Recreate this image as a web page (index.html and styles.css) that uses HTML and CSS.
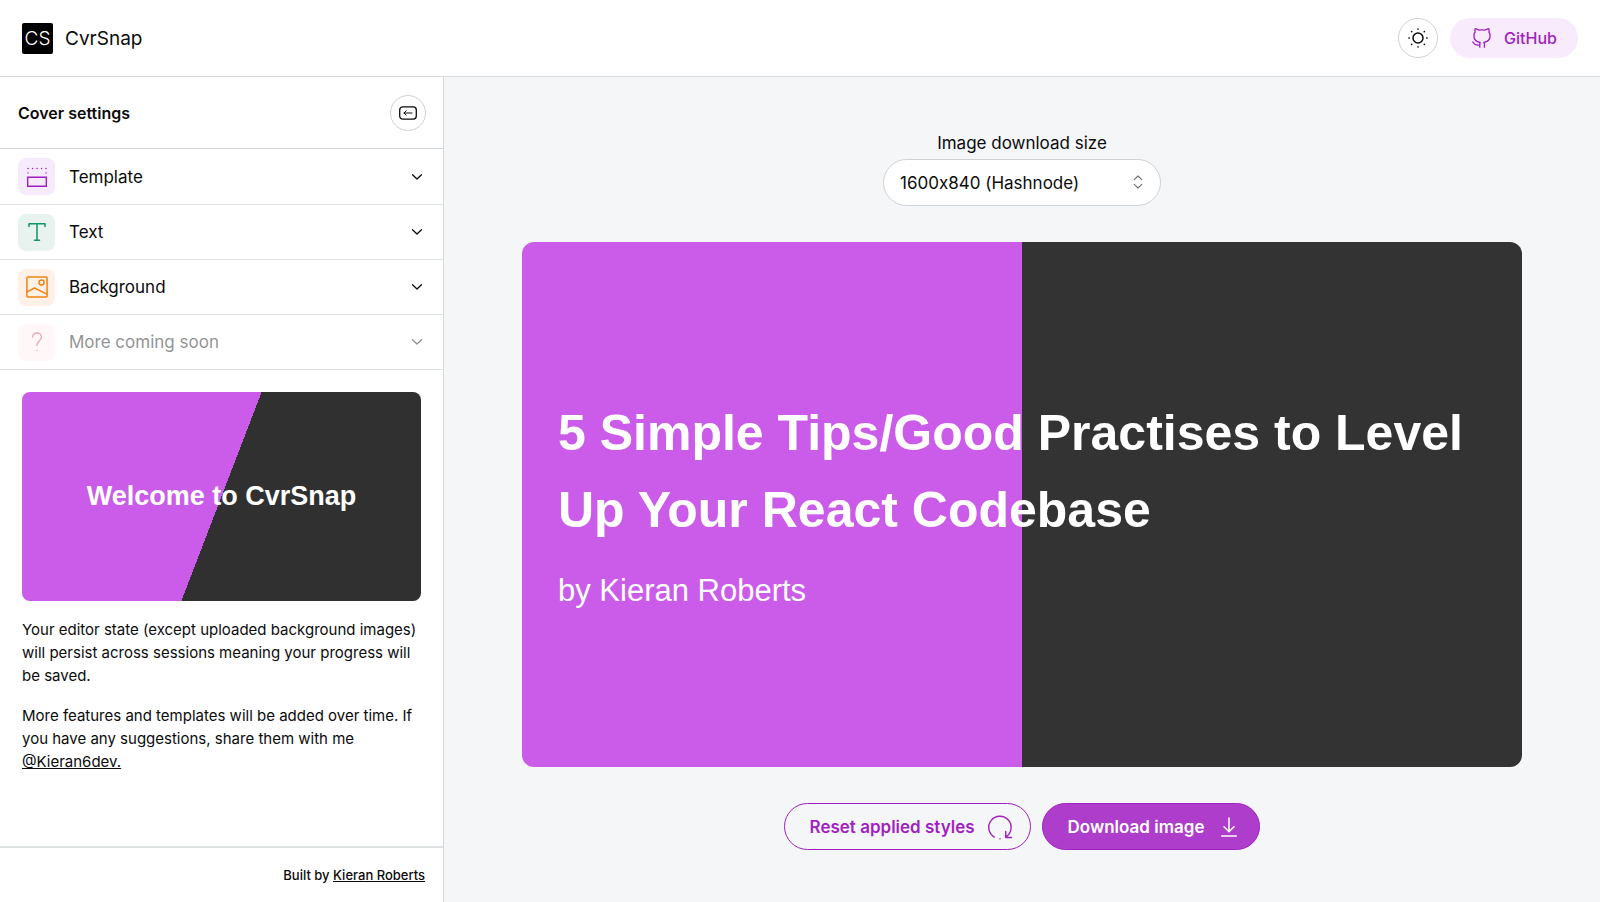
FILE: index.html
```html
<!DOCTYPE html>
<html lang="en">
<head>
<meta charset="utf-8">
<meta name="viewport" content="width=device-width, initial-scale=1">
<title>CvrSnap</title>
<link rel="stylesheet" href="styles.css">
</head>
<body>
<header class="topbar">
  <a class="brand" href="#"><span class="brand-mark">CS</span><span>CvrSnap</span></a>
  <div class="topbar-actions">
    <button class="round-button round-button-large" type="button" aria-label="Toggle theme">
      <svg width="20" height="20" viewBox="0 0 20 20" fill="none" stroke="currentColor" stroke-width="1.5" stroke-linecap="round"><circle cx="10" cy="10" r="5"/><path d="M10 .9v.4M10 18.7v.4M.9 10h.4M18.7 10h.4M3.6 3.6l.2.2M16.2 16.2l.2.2M16.4 3.6l-.2.2M3.8 16.2l-.2.2"/></svg>
    </button>
    <a class="github" href="#">
      <svg width="20" height="20" viewBox="0 0 20 20" fill="none" stroke="currentColor" stroke-width="1.3" stroke-linecap="round" stroke-linejoin="round"><path d="M7.800 19.200v-3.300c0-.6.100-1 .4-1.400C4.600 13.800 1.900 11.600 1.900 7.700c0-1.500.4-2.700 1.200-3.700-.3-1-.2-2.200.1-3.300 1.400.1 2.500.6 3.500 1.400 2.200-.4 4.400-.4 6.600 0 1-.8 2.100-1.300 3.500-1.400.3 1.100.4 2.300.1 3.300.8 1 1.200 2.200 1.200 3.700 0 3.900-2.700 6.100-6.300 6.800.3.400.6.800.6 1.400v3.300M7.800 17c-2 .4-3.700.2-4.900-.7-.9-.7-1.300-1.700-2.100-2.300"/></svg>
      <span>GitHub</span>
    </a>
  </div>
</header>
<div class="workspace">
  <aside class="sidebar">
    <div class="sidebar-head">
      <h2>Cover settings</h2>
      <button class="round-button" type="button" aria-label="Collapse settings">
        <svg width="18" height="14" viewBox="0 0 18 14" fill="none" stroke="currentColor" stroke-linecap="round" stroke-linejoin="round"><rect x=".7" y=".9" width="16.600" height="12.200" rx="3" stroke-width="1.300"/><path d="M13 7H5M7.200 4.800 5 7l2.200 2.200"/></svg>
      </button>
    </div>
    <nav class="sections" aria-label="Cover settings">
      <button class="section" type="button">
        <span class="tile tile-purple"><svg width="22" height="22" viewBox="0 0 22 22" fill="none" stroke="currentColor" stroke-width="1.400"><path d="M1.700 11.200h18.600v9.100H1.700z"/><path stroke-linecap="round" d="M2 2.500h.1M6.500 2.500h.1M11 2.500h.1M15.500 2.500h.1M20 2.500h.1M2 6.900h.1M20 6.900h.1"/></svg></span>
        <span class="section-name">Template</span>
        <svg class="chevron" width="12" height="8" viewBox="0 0 12 8"><path d="m1.500 1.800 4.500 4.200 4.500-4.200"/></svg>
      </button>
      <button class="section" type="button">
        <span class="tile tile-green"><svg width="22" height="22" viewBox="0 0 22 22" fill="none" stroke="currentColor" stroke-width="1.500" stroke-linecap="round" stroke-linejoin="round"><path d="M3 5.500V2.800h16v2.700M11 2.800v16.400M8.500 19.200h5"/></svg></span>
        <span class="section-name">Text</span>
        <svg class="chevron" width="12" height="8" viewBox="0 0 12 8"><path d="m1.500 1.800 4.500 4.200 4.500-4.200"/></svg>
      </button>
      <button class="section" type="button">
        <span class="tile tile-orange"><svg width="22" height="22" viewBox="0 0 22 22" fill="none" stroke="currentColor" stroke-width="1.500" stroke-linejoin="round"><rect x=".9" y=".9" width="20.200" height="20.200" rx="1"/><circle cx="15.500" cy="6.500" r="2.500"/><path d="M1 15.800 8.500 12 21 18.100"/></svg></span>
        <span class="section-name">Background</span>
        <svg class="chevron" width="12" height="8" viewBox="0 0 12 8"><path d="m1.500 1.800 4.500 4.200 4.500-4.200"/></svg>
      </button>
      <button class="section" type="button" disabled>
        <span class="tile tile-red"><svg width="22" height="22" viewBox="0 0 22 22" fill="none" stroke="currentColor" stroke-width="1.300" stroke-linecap="round" stroke-linejoin="round"><path d="M6.500 6.200C6.500 3.600 8.500 2 11 2s4.500 1.700 4.500 4.100c0 3.200-4.500 4.400-4.500 7.700v.7M11 19.300v.2"/></svg></span>
        <span class="section-name">More coming soon</span>
        <svg class="chevron" width="12" height="8" viewBox="0 0 12 8"><path d="m1.500 1.800 4.500 4.200 4.500-4.200"/></svg>
      </button>
    </nav>
    <div class="intro">
      <div class="welcome">Welcome to CvrSnap</div>
      <p>Your editor state (except uploaded background images) will persist across sessions meaning your progress will be saved.</p>
      <p>More features and templates will be added over time. If you have any suggestions, share them with me <a href="#">@Kieran6dev.</a></p>
    </div>
    <footer class="credit">Built by <a href="#">Kieran Roberts</a></footer>
  </aside>
  <main class="editor">
    <div class="size-field">
      <label for="size">Image download size</label>
      <div class="select-wrap">
        <select id="size"><option>1600x840 (Hashnode)</option></select>
        <svg class="select-arrows" width="10" height="14" viewBox="0 0 10 14" fill="none" stroke="currentColor" stroke-width="1.100" stroke-linecap="round" stroke-linejoin="round"><path d="m1.200 4.700 3.800-3.700 3.800 3.700M1.200 9.300 5 13l3.800-3.700"/></svg>
      </div>
    </div>
    <section class="cover" aria-label="Cover preview">
      <h1>5 Simple Tips/Good Practises to Level Up Your React Codebase</h1>
      <p>by Kieran Roberts</p>
    </section>
    <div class="actions">
      <button class="pill pill-outline" type="button">Reset applied styles
        <svg width="26" height="26" viewBox="0 0 26 26" fill="none" stroke="currentColor" stroke-width="1.400" stroke-linecap="round" stroke-linejoin="round"><path d="M7.300 23.100A11.200 11.200 0 1 1 19.200 22.700M18.700 17.500v6h5.800M13 24.800v.1"/></svg>
      </button>
      <button class="pill pill-solid" type="button">Download image
        <svg width="20" height="20" viewBox="0 0 20 20" fill="none" stroke="currentColor" stroke-width="1.500" stroke-linecap="round" stroke-linejoin="round"><path d="M10 1v13.500M5 9.800l5 4.900 5-4.900M2.700 19h14.600"/></svg>
      </button>
    </div>
  </main>
</div>
</body>
</html>
```
FILE: styles.css
```css
*, *::before, *::after { box-sizing: border-box; }

body {
  margin: 0;
  min-height: 100vh;
  display: flex;
  flex-direction: column;
  background: #fff;
  color: #0b0b0c;
  font-family: Inter, "Liberation Sans", sans-serif;
  font-size: 15px;
}

button, select { font: inherit; color: inherit; cursor: pointer; }
a { color: inherit; }
h1, h2, p { margin: 0; }
svg { display: block; flex: none; }

.topbar {
  display: flex;
  align-items: center;
  justify-content: space-between;
  height: 77px;
  padding: 0 22px;
  border-bottom: 1px solid #d9dbdd;
}

.brand {
  display: flex;
  align-items: center;
  gap: 12px;
  font-size: 19px;
  text-decoration: none;
}

.brand-mark {
  display: grid;
  place-items: center;
  width: 31px;
  height: 31px;
  border-radius: 2px;
  background: #000;
  color: #fff;
  font-size: 19px;
  font-weight: 300;
}

.topbar-actions { display: flex; align-items: center; gap: 12px; }

.round-button {
  display: grid;
  place-items: center;
  width: 36px;
  height: 36px;
  padding: 0;
  border: 1px solid #cfd1d3;
  border-radius: 50%;
  background: #fff;
}

.round-button-large { width: 40px; height: 40px; }

.github {
  display: flex;
  align-items: center;
  gap: 12px;
  height: 40px;
  padding: 0 21px 0 22px;
  border-radius: 20px;
  background: #f7ebfc;
  color: #a21fc0;
  font-size: 16px;
  font-weight: 500;
  text-decoration: none;
}

.workspace { flex: 1; display: flex; }

.sidebar {
  display: flex;
  flex-direction: column;
  flex: none;
  width: 444px;
  border-right: 1px solid #d5d9dc;
}

.sidebar-head {
  display: flex;
  align-items: center;
  justify-content: space-between;
  height: 72px;
  padding: 0 17px 0 18px;
  border-bottom: 1px solid #d5d9dc;
}

.sidebar-head h2 { font-size: 16px; font-weight: 600; }

.section {
  display: flex;
  align-items: center;
  gap: 14px;
  width: 100%;
  padding: 9px 20px 9px 18px;
  border: 0;
  border-bottom: 1px solid #dfe2e3;
  background: #fff;
  font-size: 17px;
  text-align: left;
}

.section-name { flex: 1; }
.section:disabled { color: #0b0b0c; cursor: default; }
.section:disabled > * { opacity: 0.45; }

.tile {
  display: grid;
  place-items: center;
  width: 37px;
  height: 37px;
  border-radius: 8px;
}

.sections .section { height: 55px; padding-block: 0; }
.sections .section:first-child { height: 56px; }

.tile-purple { background: #f5ebfa; color: #a21fc0; }
.tile-green { background: #e8f3ef; color: #12946b; }
.tile-orange { background: #fff1e7; color: #ef8411; }
.tile-red { background: #ffeef1; color: #d6336c; }

.chevron { fill: none; stroke: currentColor; stroke-width: 1.3; stroke-linecap: round; stroke-linejoin: round; }

.intro {
  flex: 1;
  display: flex;
  flex-direction: column;
  gap: 17px;
  padding: 22px;
  line-height: 23px;
}

.welcome {
  display: grid;
  place-items: center;
  aspect-ratio: 1600 / 838;
  border-radius: 8px;
  background: linear-gradient(111deg, #cb5cea 50%, #303030 50%);
  color: #fff;
  font-family: "Liberation Sans", Arial, sans-serif;
  font-size: 27px;
  font-weight: 700;
}

.credit {
  padding: 18px;
  border-top: 2px solid #dfe2e3;
  font-size: 13px;
  font-weight: 500;
  line-height: 18px;
  text-align: right;
}

.editor {
  flex: 1;
  min-width: 0;
  display: flex;
  flex-direction: column;
  align-items: center;
  justify-content: center;
  gap: 36px;
  padding: 24px 78px;
  background: #f4f6f8;
}

.size-field {
  display: flex;
  flex-direction: column;
  align-items: center;
  gap: 2px;
  font-size: 17px;
}

.size-field label { line-height: 28px; }

.select-wrap { position: relative; }

.select-wrap select {
  appearance: none;
  width: 278px;
  height: 47px;
  padding: 0 44px 0 16px;
  border: 1px solid #cfd2d5;
  border-radius: 24px;
  background: #fff;
  font-variant-ligatures: no-contextual;
}

.select-arrows { position: absolute; right: 18px; top: 16px; color: #6b6f73; pointer-events: none; }

.cover {
  display: flex;
  flex-direction: column;
  justify-content: center;
  gap: 18px;
  width: 100%;
  max-width: 1000px;
  aspect-ratio: 1600 / 840;
  padding: 0 36px;
  border-radius: 12px;
  background: linear-gradient(to right, #cb5cea 50%, #333 50%);
  color: #fff;
  font-family: "Liberation Sans", Arial, sans-serif;
}

.cover h1 { font-size: 50px; line-height: 77px; }
.cover p { font-size: 31px; line-height: 48px; }

.actions { display: flex; gap: 11px; }

.pill {
  display: flex;
  align-items: center;
  gap: 12px;
  height: 47px;
  padding: 0 17px 0 25px;
  border: 1px solid #a21fc0;
  border-radius: 24px;
  font-size: 17px;
  font-weight: 600;
}

.pill-outline { background: transparent; color: #a21fc0; }
.pill-solid { gap: 15px; padding-right: 20px; background: #ae3dcb; color: #fff; }
```
